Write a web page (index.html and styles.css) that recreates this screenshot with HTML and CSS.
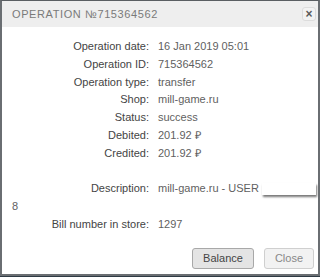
FILE: index.html
```html
<!DOCTYPE html>
<html lang="en">
<head>
    <meta charset="UTF-8">
    <meta name="viewport" content="width=device-width, initial-scale=1.0">
    <title>Operation</title>
    <link rel="stylesheet" href="styles.css">
</head>
<body>
    <div class="dialog">
        <div class="dialog-header">
            <span class="dialog-title">Operation №715364562</span>
            <button class="dialog-close">&times;</button>
        </div>
        <div class="dialog-body">
            <div class="row"><span class="label">Operation date:</span><span class="value">16 Jan 2019 05:01</span></div>
            <div class="row"><span class="label">Operation ID:</span><span class="value">715364562</span></div>
            <div class="row"><span class="label">Operation type:</span><span class="value">transfer</span></div>
            <div class="row"><span class="label">Shop:</span><span class="value">mill-game.ru</span></div>
            <div class="row"><span class="label">Status:</span><span class="value">success</span></div>
            <div class="row"><span class="label">Debited:</span><span class="value">201.92 ₽</span></div>
            <div class="row"><span class="label">Credited:</span><span class="value">201.92 ₽</span></div>
            <div class="row empty"></div>
            <div class="row"><span class="label">Description:</span><span class="value">mill-game.ru - USER <span class="redact"></span><wbr>8</span></div>
            <div class="row"><span class="label">Bill number in store:</span><span class="value">1297</span></div>
        </div>
        <div class="dialog-footer">
            <button class="btn">Balance</button>
            <button class="btn btn-light">Close</button>
        </div>
    </div>
</body>
</html>
```

FILE: styles.css
```css
body {
    margin: 0;
    background: #2f3a44;
    font-family: "Liberation Sans", Arial, sans-serif;
}

.dialog {
    height: 273px;
    background: #fff;
    border: 2px solid #6a6e72;
    border-top: 1px solid #5a5e62;
    box-sizing: content-box;
    width: 316px;
}

.dialog-header {
    display: flex;
    align-items: center;
    justify-content: space-between;
    height: 26px;
    padding: 0 2px 0 10px;
    background: #eeeeee;
}

.dialog-title {
    text-transform: uppercase;
    font-size: 11px;
    letter-spacing: 0.6px;
    color: #7a7a7a;
}

.dialog-close {
    width: 14px;
    height: 14px;
    padding: 0;
    border: 1px solid #dcdcdc;
    border-radius: 3px;
    background: #f2f2f2;
    color: #5a5a5a;
    font-size: 12px;
    font-weight: bold;
    line-height: 11px;
}

.dialog-body {
    padding: 11px 2px 0 10px;
    font-size: 11px;
    line-height: 17.8px;
    color: #555;
}

.row.empty {
    height: 17.8px;
}

.label {
    display: inline-block;
    width: 137px;
    margin-right: 9px;
    text-align: right;
    color: #444;
}

.value {
    color: #5f5f5f;
}

.redact {
    display: inline-block;
    width: 54px;
    height: 12px;
    vertical-align: middle;
    background: #fff;
    box-shadow: 1px 2px 2px #777;
}

.dialog-footer {
    display: flex;
    justify-content: flex-end;
    gap: 10px;
    padding: 14px 4px 0 0;
}

.btn {
    height: 21px;
    padding: 0 10px;
    font-family: "Liberation Sans", Arial, sans-serif;
    font-size: 11px;
    color: #444;
    background: #e4e4e4;
    border: 1px solid #a8a8a8;
    border-radius: 3px;
}

.btn-light {
    color: #888;
    background: #f2f2f2;
    border-color: #cfcfcf;
}
```
